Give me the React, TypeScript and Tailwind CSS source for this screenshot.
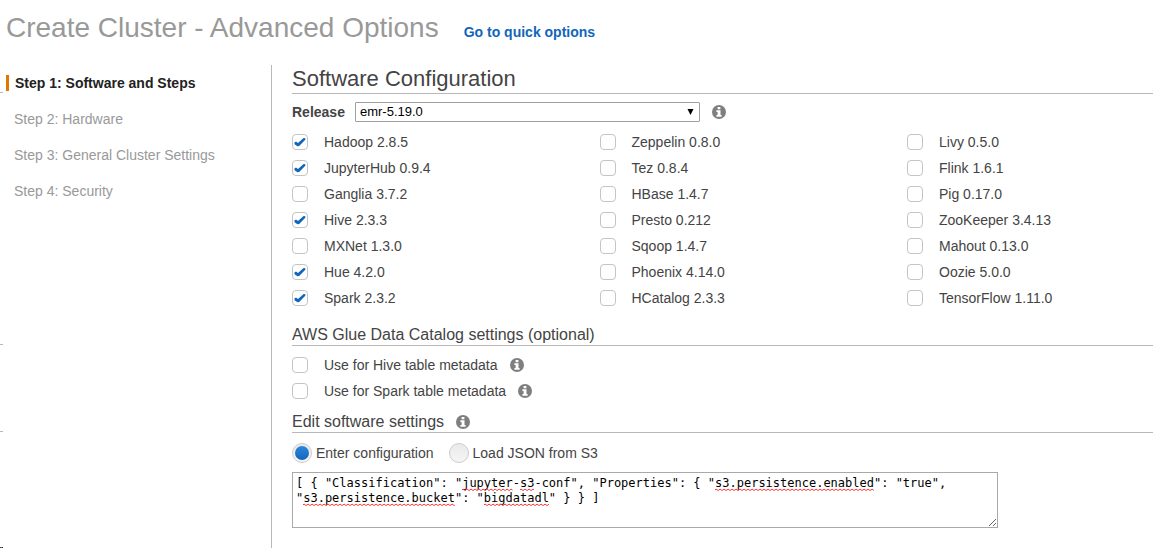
import React, { useState } from "react";

const steps = [
  "Step 1: Software and Steps",
  "Step 2: Hardware",
  "Step 3: General Cluster Settings",
  "Step 4: Security",
];

const applications: { name: string; selected?: boolean }[] = [
  { name: "Hadoop 2.8.5", selected: true },
  { name: "Zeppelin 0.8.0" },
  { name: "Livy 0.5.0" },
  { name: "JupyterHub 0.9.4", selected: true },
  { name: "Tez 0.8.4" },
  { name: "Flink 1.6.1" },
  { name: "Ganglia 3.7.2" },
  { name: "HBase 1.4.7" },
  { name: "Pig 0.17.0" },
  { name: "Hive 2.3.3", selected: true },
  { name: "Presto 0.212" },
  { name: "ZooKeeper 3.4.13" },
  { name: "MXNet 1.3.0" },
  { name: "Sqoop 1.4.7" },
  { name: "Mahout 0.13.0" },
  { name: "Hue 4.2.0", selected: true },
  { name: "Phoenix 4.14.0" },
  { name: "Oozie 5.0.0" },
  { name: "Spark 2.3.2", selected: true },
  { name: "HCatalog 2.3.3" },
  { name: "TensorFlow 1.11.0" },
];

const configLines = [
  '[ { "Classification": "jupyter-s3-conf", "Properties": { "s3.persistence.enabled": "true",',
  '"s3.persistence.bucket": "bigdatadl" } } ]',
];

const unknownWords = [
  { line: 0, word: "jupyter" },
  { line: 0, word: "s3" },
  { line: 0, word: "s3.persistence.enabled" },
  { line: 1, word: "s3.persistence.bucket" },
  { line: 1, word: "bigdatadl" },
];

function Info({ label }: { label: string }) {
  return (
    <button type="button" aria-label={label} className="flex h-[14px] w-[14px] items-center justify-center">
      <svg viewBox="0 0 14 14" className="h-[14px] w-[14px]">
        <circle cx="7" cy="7" r="7" fill="#7f7f7f" />
        <path d="M5.6 2H8.4V4.2H5.6ZM4.4 5.2H8.5V10H9.6V11.8H4.4V10H5.6V7H4.4Z" fill="#fff" />
      </svg>
    </button>
  );
}

function CheckOption({ label, checked = false }: { label: string; checked?: boolean }) {
  return (
    <label className="flex h-[26px] items-center gap-4">
      <span className="relative flex h-4 w-4 items-center justify-center">
        <input
          type="checkbox"
          defaultChecked={checked}
          className="peer h-4 w-4 appearance-none rounded border border-[#c4c4c4] bg-white"
        />
        <svg
          aria-hidden="true"
          viewBox="0 0 16 16"
          className="pointer-events-none absolute hidden h-4 w-4 peer-checked:block"
        >
          <path
            d="M2.4 8.6 L4 7.4 L6 9 L11.6 3.9 L13.4 4.2 L13.3 5.8 L7.2 12 L5.4 12.2 L2.6 10.2 Z"
            fill="#1166bb"
          />
        </svg>
      </span>
      {label}
    </label>
  );
}

function RadioOption({ label, checked = false }: { label: string; checked?: boolean }) {
  return (
    <label className="flex items-center gap-1">
      <span className="relative flex h-5 w-5 items-center justify-center">
        <input
          type="radio"
          name="config-source"
          defaultChecked={checked}
          className="peer h-5 w-5 appearance-none rounded-full border border-[#cccccc] bg-linear-to-b from-[#eaeaea] to-[#f5f5f5]"
        />
        <span className="pointer-events-none absolute hidden h-[14px] w-[14px] rounded-full bg-linear-to-b from-[#2b86dc] to-[#1166bb] peer-checked:block" />
      </span>
      {label}
    </label>
  );
}

function Squiggle({ line, word }: { line: number; word: string }) {
  const start = configLines[line].indexOf(word);
  const id = `wave-${line}-${start}`;
  return (
    <svg
      aria-hidden="true"
      className="absolute h-[3px]"
      style={{ left: `${start}ch`, top: `${line * 15 + 12}px`, width: `${word.length}ch` }}
    >
      <defs>
        <pattern id={id} width="4" height="3" patternUnits="userSpaceOnUse">
          <path d="M0 2 L1 1 L3 2.5 L4 2" fill="none" stroke="#ff3838" strokeWidth="1" />
        </pattern>
      </defs>
      <rect width="100%" height="3" fill={`url(#${id})`} />
    </svg>
  );
}

function ConfigEditor() {
  const initial = configLines.join("\n");
  const [value, setValue] = useState(initial);
  return (
    <div className="relative mt-[9px] h-14 w-[706px] max-w-full font-['DejaVu_Sans_Mono',monospace] text-[12px] leading-[15px]">
      <textarea
        aria-label="Configuration"
        spellCheck={false}
        value={value}
        onChange={(e) => setValue(e.target.value)}
        className="block h-14 w-full resize rounded-none border border-[#a9a9a9] bg-white px-[3px] py-[3px] text-black"
      />
      {value === initial && (
        <div className="pointer-events-none absolute inset-0 m-1 overflow-hidden">
          {unknownWords.map((item) => (
            <Squiggle key={`${item.line}-${item.word}`} line={item.line} word={item.word} />
          ))}
        </div>
      )}
    </div>
  );
}

export default function App() {
  return (
    <div className="relative flex min-h-screen flex-col overflow-hidden bg-white font-['Liberation_Sans',Arial,sans-serif] text-[14px] leading-[18px] text-[#444444]">
      <header className="flex h-[65px] items-baseline gap-[25px] pt-3 pl-[6px]">
        <h1 className="text-[28px] leading-8 text-[#999999]">Create Cluster - Advanced Options</h1>
        <a href="#quick" className="font-bold text-[#1166bb]">
          Go to quick options
        </a>
      </header>

      <div className="flex grow">
        <nav aria-label="Steps" className="w-[272px] shrink-0 border-r border-[#b8b8b8] pl-[6px]">
          <ol>
            {steps.map((step, i) => (
              <li key={step} className="flex h-9 items-center">
                <a
                  href={`#step-${i + 1}`}
                  aria-current={i === 0 ? "step" : undefined}
                  className={
                    i === 0
                      ? "border-l-[3px] border-[#e07700] pl-[6px] leading-4 font-bold text-[#222222]"
                      : "pl-2 text-[#999999]"
                  }
                >
                  {step}
                </a>
              </li>
            ))}
          </ol>
        </nav>

        <main className="min-w-0 grow pl-5">
          <h2 className="h-[29px] border-b border-[#b8b8b8] text-[22px] leading-[27px]">Software Configuration</h2>

          <div className="mt-2 flex h-5 items-center">
            <label htmlFor="release" className="font-bold">
              Release
            </label>
            <div className="relative ml-[10px] w-[345px]">
              <select
                id="release"
                className="block h-5 w-full appearance-none rounded-[1px] border border-[#a0a0a0] bg-white pl-1 text-[13px] leading-[18px] text-black"
              >
                <option>emr-5.19.0</option>
              </select>
              <svg viewBox="0 0 7 6" className="pointer-events-none absolute top-[7px] right-[6px] h-[6px] w-[7px]">
                <path d="M0.5 0H6.5L3.5 6Z" fill="#000" />
              </svg>
            </div>
            <div className="ml-3">
              <Info label="About releases" />
            </div>
          </div>

          <div className="mt-[7px] grid grid-cols-[5fr_5fr_4fr]">
            {applications.map((app) => (
              <CheckOption key={app.name} label={app.name} checked={app.selected} />
            ))}
          </div>

          <h3 className="mt-[13px] h-[22px] border-b border-[#b8b8b8] text-[16px] leading-[22px]">
            AWS Glue Data Catalog settings (optional)
          </h3>
          <div className="mt-[6px]">
            <div className="flex items-center gap-3">
              <CheckOption label="Use for Hive table metadata" />
              <Info label="About Hive table metadata" />
            </div>
            <div className="flex items-center gap-3">
              <CheckOption label="Use for Spark table metadata" />
              <Info label="About Spark table metadata" />
            </div>
          </div>

          <div className="mt-[7px] flex h-[22px] items-center gap-3 border-b border-[#b8b8b8]">
            <h3 className="text-[16px] leading-5">Edit software settings</h3>
            <Info label="About software settings" />
          </div>
          <div className="mt-[10px] flex items-center gap-[15px]">
            <RadioOption label="Enter configuration" checked />
            <RadioOption label="Load JSON from S3" />
          </div>
          <ConfigEditor />
        </main>
      </div>

      <div aria-hidden="true" className="pointer-events-none absolute top-[92px] left-0 h-px w-[3px] bg-[#b8b8b8]" />
      <div aria-hidden="true" className="pointer-events-none absolute top-[344px] left-0 h-px w-[3px] bg-[#b8b8b8]" />
      <div aria-hidden="true" className="pointer-events-none absolute top-[431px] left-0 h-px w-[3px] bg-[#b8b8b8]" />
      <svg aria-hidden="true" viewBox="0 0 3 1" className="pointer-events-none absolute bottom-0 left-0 h-px w-[3px]">
        <path d="M0 0H1V1H0Z" fill="#a01010" />
        <path d="M1 0H2V1H1Z" fill="#508050" />
        <path d="M2 0H3V1H2Z" fill="#1010a0" />
      </svg>
    </div>
  );
}
